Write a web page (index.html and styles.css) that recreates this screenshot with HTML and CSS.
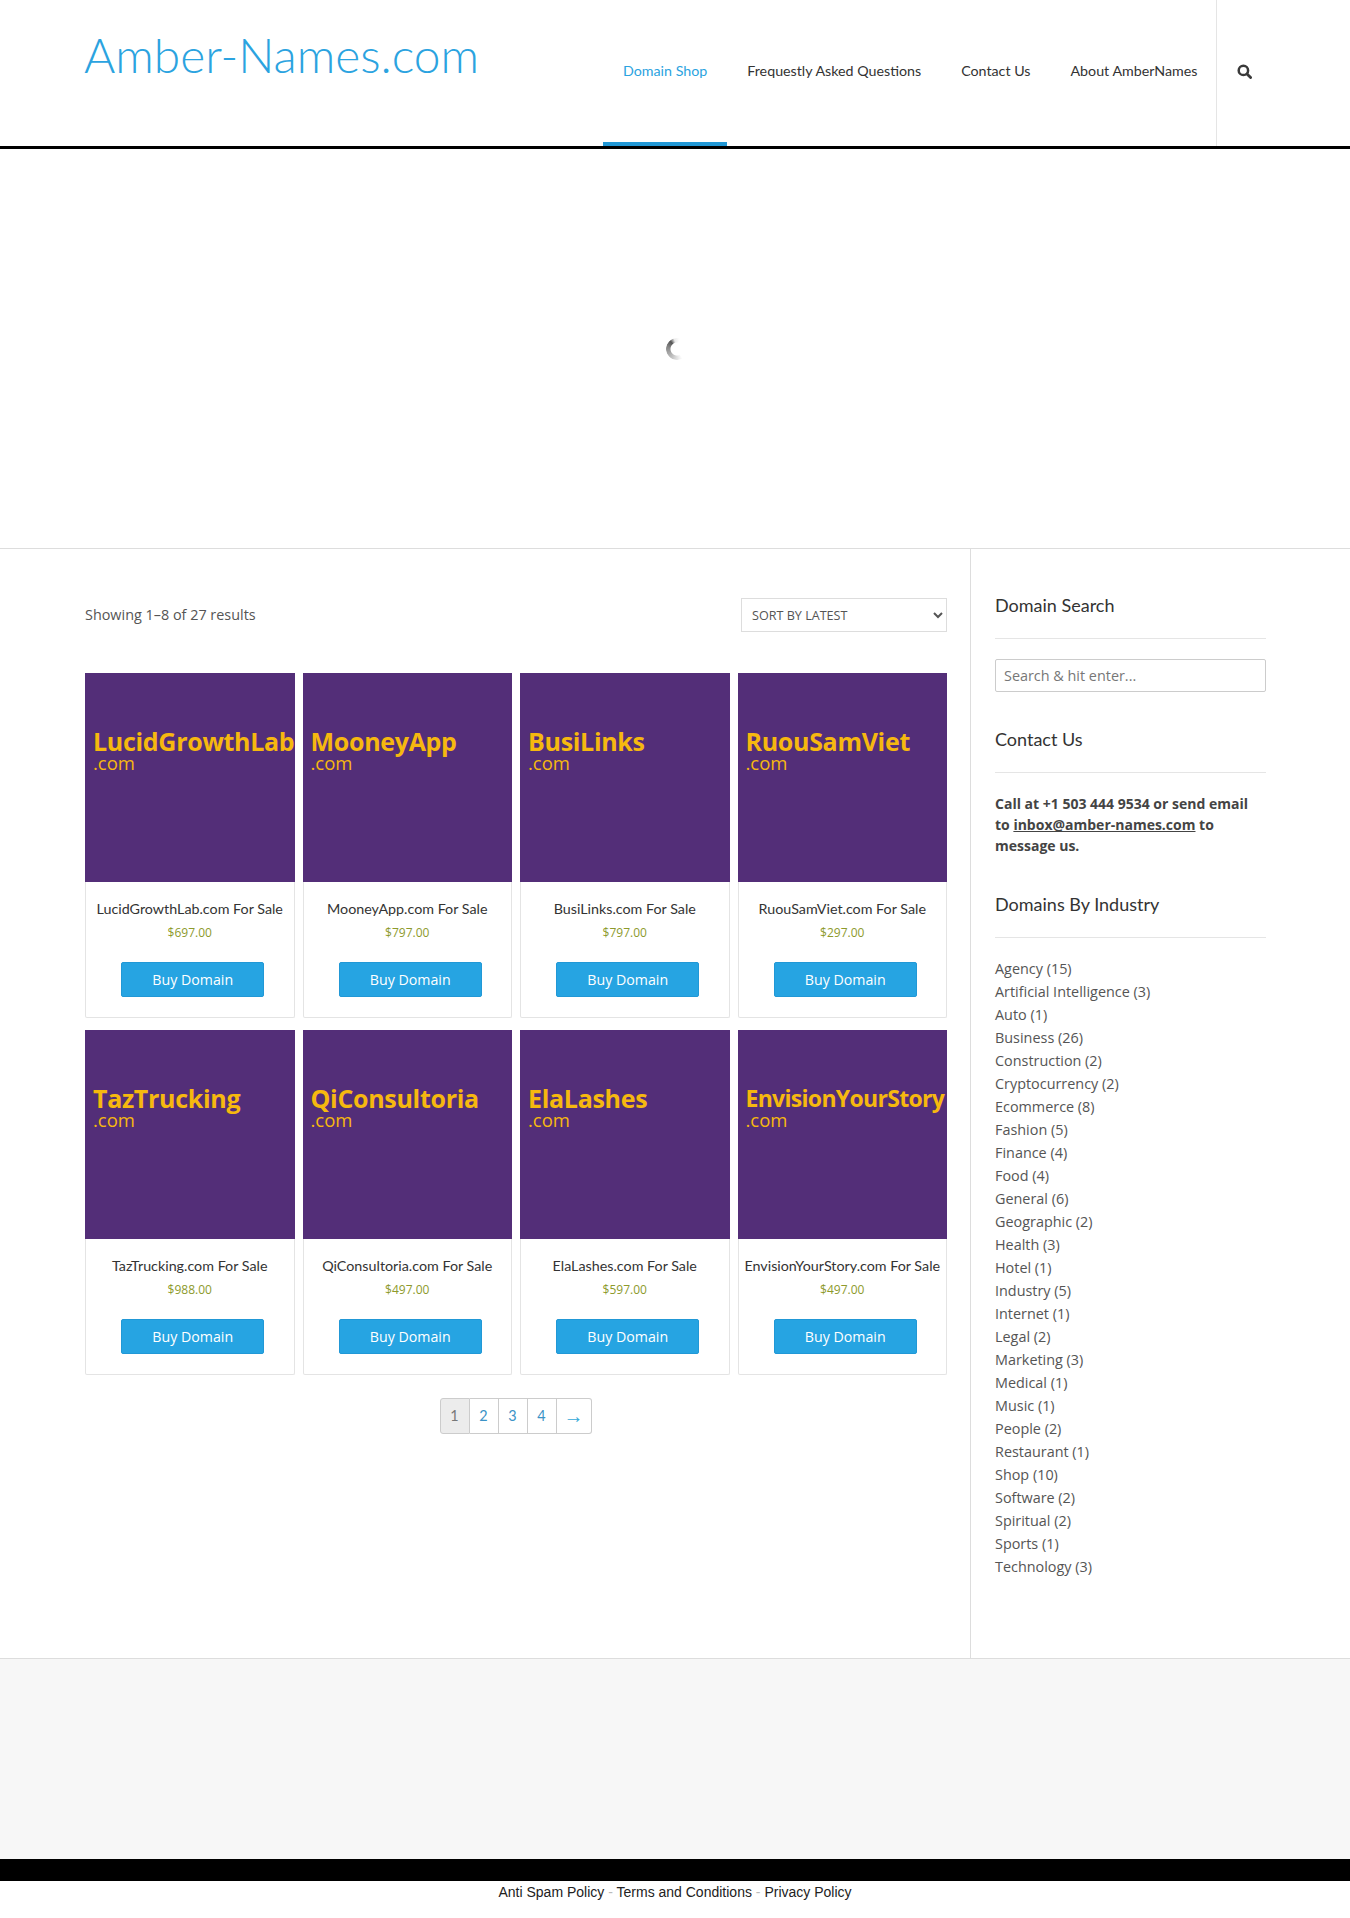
FILE: index.html
```html
<!DOCTYPE html>
<html lang="en">
<head>
  <meta charset="UTF-8">
  <meta name="viewport" content="width=device-width, initial-scale=1.0">
  <title>Amber-Names.com</title>
  <link rel="stylesheet" href="styles.css">
</head>
<body>
  <header class="site-header">
    <a class="logo" href="#">Amber-Names.com</a>
    <nav class="main-nav">
      <a class="nav-link active" href="#">Domain Shop</a>
      <a class="nav-link" href="#">Frequestly Asked Questions</a>
      <a class="nav-link" href="#">Contact Us</a>
      <a class="nav-link" href="#">About AmberNames</a>
    </nav>
    <div class="nav-search">
      <svg class="search-icon" width="15" height="15" viewBox="0 0 15 15" aria-hidden="true">
        <circle cx="6.4" cy="6.4" r="4.7" fill="none" stroke="#3a3a3a" stroke-width="2.5"/>
        <path d="M10 10l3.6 3.6" stroke="#3a3a3a" stroke-width="2.8" stroke-linecap="round"/>
      </svg>
    </div>
  </header>

  <section class="hero">
    <div class="spinner"></div>
  </section>

  <main class="page-body">
    <div class="shop">
      <div class="shop-bar">
        <p class="result-count">Showing 1–8 of 27 results</p>
        <select class="sort-select">
          <option>Sort by latest</option>
        </select>
      </div>

      <ul class="products">
        <li class="product">
          <div class="thumb"><span class="thumb-name">LucidGrowthLab</span><span class="thumb-tld">.com</span></div>
          <h3 class="product-title">LucidGrowthLab.com For Sale</h3>
          <span class="price">$697.00</span>
          <a class="buy-button" href="#">Buy Domain</a>
        </li>
        <li class="product">
          <div class="thumb"><span class="thumb-name">MooneyApp</span><span class="thumb-tld">.com</span></div>
          <h3 class="product-title">MooneyApp.com For Sale</h3>
          <span class="price">$797.00</span>
          <a class="buy-button" href="#">Buy Domain</a>
        </li>
        <li class="product">
          <div class="thumb"><span class="thumb-name">BusiLinks</span><span class="thumb-tld">.com</span></div>
          <h3 class="product-title">BusiLinks.com For Sale</h3>
          <span class="price">$797.00</span>
          <a class="buy-button" href="#">Buy Domain</a>
        </li>
        <li class="product">
          <div class="thumb"><span class="thumb-name">RuouSamViet</span><span class="thumb-tld">.com</span></div>
          <h3 class="product-title">RuouSamViet.com For Sale</h3>
          <span class="price">$297.00</span>
          <a class="buy-button" href="#">Buy Domain</a>
        </li>
        <li class="product">
          <div class="thumb"><span class="thumb-name">TazTrucking</span><span class="thumb-tld">.com</span></div>
          <h3 class="product-title">TazTrucking.com For Sale</h3>
          <span class="price">$988.00</span>
          <a class="buy-button" href="#">Buy Domain</a>
        </li>
        <li class="product">
          <div class="thumb"><span class="thumb-name">QiConsultoria</span><span class="thumb-tld">.com</span></div>
          <h3 class="product-title">QiConsultoria.com For Sale</h3>
          <span class="price">$497.00</span>
          <a class="buy-button" href="#">Buy Domain</a>
        </li>
        <li class="product">
          <div class="thumb"><span class="thumb-name">ElaLashes</span><span class="thumb-tld">.com</span></div>
          <h3 class="product-title">ElaLashes.com For Sale</h3>
          <span class="price">$597.00</span>
          <a class="buy-button" href="#">Buy Domain</a>
        </li>
        <li class="product">
          <div class="thumb"><span class="thumb-name long">EnvisionYourStory</span><span class="thumb-tld">.com</span></div>
          <h3 class="product-title">EnvisionYourStory.com For Sale</h3>
          <span class="price">$497.00</span>
          <a class="buy-button" href="#">Buy Domain</a>
        </li>
      </ul>

      <div class="pager">
        <span class="page current">1</span>
        <a class="page" href="#">2</a>
        <a class="page" href="#">3</a>
        <a class="page" href="#">4</a>
        <a class="page page-next" href="#">→</a>
      </div>
    </div>

    <aside class="sidebar">
      <h4 class="widget-title">Domain Search</h4>
      <input class="search-input" type="text" placeholder="Search &amp; hit enter...">

      <h4 class="widget-title">Contact Us</h4>
      <p class="contact-text">Call at +1 503 444 9534 or send email to <a href="#">inbox@amber-names.com</a> to message us.</p>

      <h4 class="widget-title">Domains By Industry</h4>
      <ul class="cat-list">
        <li>Agency (15)</li>
        <li>Artificial Intelligence (3)</li>
        <li>Auto (1)</li>
        <li>Business (26)</li>
        <li>Construction (2)</li>
        <li>Cryptocurrency (2)</li>
        <li>Ecommerce (8)</li>
        <li>Fashion (5)</li>
        <li>Finance (4)</li>
        <li>Food (4)</li>
        <li>General (6)</li>
        <li>Geographic (2)</li>
        <li>Health (3)</li>
        <li>Hotel (1)</li>
        <li>Industry (5)</li>
        <li>Internet (1)</li>
        <li>Legal (2)</li>
        <li>Marketing (3)</li>
        <li>Medical (1)</li>
        <li>Music (1)</li>
        <li>People (2)</li>
        <li>Restaurant (1)</li>
        <li>Shop (10)</li>
        <li>Software (2)</li>
        <li>Spiritual (2)</li>
        <li>Sports (1)</li>
        <li>Technology (3)</li>
      </ul>
    </aside>
  </main>

  <section class="footer-widgets"></section>
  <div class="footer-bar"></div>
  <footer class="footer-links">
    <a href="#">Anti Spam Policy</a>
    <span class="sep">-</span>
    <a href="#">Terms and Conditions</a>
    <span class="sep">-</span>
    <a href="#">Privacy Policy</a>
  </footer>
</body>
</html>
```

FILE: styles.css
```css
body {
  font-family: "Open Sans", sans-serif;
  font-size: 14px;
  color: #444;
  margin: 0;
  padding: 0;
  background-color: #fff;
}

a {
  text-decoration: none;
}

/* header */
.site-header {
  display: flex;
  height: 146px;
  padding-left: 84px;
  border-bottom: 3px solid #000;
  box-sizing: content-box;
}

.logo {
  font-family: Lato, sans-serif;
  font-weight: 300;
  font-size: 47.9px;
  line-height: 58px;
  margin-top: 26px;
  color: #2ba3e0;
  width: 519px;
}

.main-nav {
  display: flex;
}

.nav-link {
  font-family: Lato, sans-serif;
  font-size: 14.25px;
  line-height: 142px;
  padding: 0 20px;
  color: #333;
}

.nav-link.active {
  color: #2ba3e0;
  border-bottom: 4px solid #2198d6;
}

.nav-search {
  width: 54px;
  margin-left: -1px;
  border-left: 1px solid #e5e5e5;
  display: flex;
  align-items: center;
  justify-content: center;
}

.search-icon {
  margin-top: -3px;
}

.hero {
  height: 399px;
  border-bottom: 1px solid #ddd;
  display: flex;
  align-items: center;
  justify-content: center;
  padding-left: 3px;
  box-sizing: content-box;
}

.spinner {
  width: 22px;
  height: 22px;
  border-radius: 50%;
  background: conic-gradient(from 150deg, rgba(90, 90, 90, 0) 0deg, rgba(170, 170, 170, 0.7) 60deg, #888 130deg, #555 170deg, rgba(190, 190, 190, 0.3) 195deg, rgba(90, 90, 90, 0) 225deg);
  -webkit-mask: radial-gradient(circle, transparent 6px, #000 7px, #000 11px);
  mask: radial-gradient(circle, transparent 6px, #000 7px, #000 11px);
}

/* main columns */
.page-body {
  display: flex;
  height: 1109px;
}

.shop {
  width: 862px;
  padding-left: 85px;
  padding-right: 23px;
  border-right: 1px solid #ddd;
  box-sizing: content-box;
}

.shop-bar {
  display: flex;
  align-items: center;
  justify-content: space-between;
  margin-top: 49px;
  height: 34px;
}

.result-count {
  margin: -2px 0 0;
  font-size: 14.4px;
  color: #555;
}

.sort-select {
  width: 206px;
  height: 34px;
  padding: 0 6px;
  font-family: "Open Sans", sans-serif;
  font-size: 12.6px;
  text-transform: uppercase;
  color: #555;
  background: #fff;
  border: 1px solid #ddd;
}

.products {
  list-style: none;
  margin: 41px 0 0;
  padding: 0;
  display: grid;
  grid-template-columns: repeat(4, minmax(0, 1fr));
  column-gap: 8px;
  row-gap: 12px;
}

.product {
  height: 345px;
  min-width: 0;
  border: 1px solid #e4e4e4;
  border-top: none;
  border-radius: 2px;
  text-align: center;
  display: flex;
  flex-direction: column;
  align-items: center;
  box-sizing: border-box;
}

.thumb {
  align-self: stretch;
  margin: 0 -1px;
  height: 209px;
  padding: 53px 0 0 8px;
  background-color: #532e78;
  color: #f6b80f;
  text-align: left;
  overflow: hidden;
  box-sizing: border-box;
  display: flex;
  flex-direction: column;
  white-space: nowrap;
}

.thumb-name {
  font-size: 25px;
  font-weight: 700;
  line-height: 30px;
  letter-spacing: -0.3px;
}

.thumb-name.long {
  font-size: 23px;
  letter-spacing: -0.7px;
}

.thumb-tld {
  font-size: 18.5px;
  line-height: 14px;
}

.product-title {
  margin: 17px 0 0;
  font-family: Lato, sans-serif;
  font-size: 14.3px;
  font-weight: 400;
  line-height: 20px;
  color: #333;
}

.price {
  margin-top: 5px;
  font-size: 12px;
  line-height: 18px;
  color: #8d9a2c;
}

.buy-button {
  display: block;
  width: 143px;
  height: 35px;
  margin: 20px 0 0 6px;
  font-size: 14.2px;
  line-height: 33px;
  text-align: center;
  color: #fff;
  background-color: #26a4e2;
  border: 1px solid #2198d6;
  border-radius: 2px;
  box-sizing: border-box;
}

.pager {
  display: flex;
  justify-content: center;
  margin-top: 23px;
  height: 36px;
  padding-right: 1px;
  font-family: Lato, sans-serif;
  font-size: 14.4px;
}

.page {
  width: 29px;
  line-height: 34px;
  text-align: center;
  color: #3b93c6;
  border: 1px solid #ccc;
  border-left: none;
  box-sizing: border-box;
}

.page.current {
  color: #777;
  background-color: #ececec;
  border-left: 1px solid #ccc;
  border-radius: 3px 0 0 3px;
  width: 30px;
}

.page-next {
  width: 35px;
  font-family: "Liberation Sans", sans-serif;
  font-size: 20px;
  color: #35a9d8;
  border-radius: 0 3px 3px 0;
}

/* sidebar */
.sidebar {
  width: 271px;
  margin-left: 24px;
  padding-top: 44px;
}

.widget-title {
  margin: 0;
  padding-bottom: 21px;
  font-family: Lato, sans-serif;
  font-size: 18px;
  font-weight: 400;
  line-height: 24px;
  color: #333;
  border-bottom: 1px solid #e5e5e5;
}

.search-input {
  display: block;
  width: 100%;
  height: 33px;
  margin: 20px 0 35px;
  padding: 0 8px;
  font-family: "Open Sans", sans-serif;
  font-size: 14.4px;
  color: #555;
  background: #fff;
  border: 1px solid #ccc;
  border-radius: 2px;
  box-sizing: border-box;
}

.search-input::placeholder {
  color: #777;
}

.contact-text {
  margin: 20px 0 36px;
  font-weight: 700;
  line-height: 21px;
  color: #444;
}

.contact-text a {
  color: #444;
  text-decoration: underline;
}

.cat-list {
  list-style: none;
  margin: 19px 0 0;
  padding: 0;
  font-size: 14.4px;
  line-height: 23px;
  color: #555;
}

/* footer */
.footer-widgets {
  height: 201px;
  background-color: #f7f7f7;
  border-top: 1px solid #ddd;
  box-sizing: border-box;
}

.footer-bar {
  height: 22px;
  background-color: #000;
}

.footer-links {
  height: 37px;
  padding-top: 2px;
  text-align: center;
  font-family: "Liberation Sans", Arial, sans-serif;
  font-size: 14px;
  line-height: 18px;
  box-sizing: border-box;
}

.footer-links a {
  color: #222;
}

.footer-links .sep {
  color: #bbb;
}
```
